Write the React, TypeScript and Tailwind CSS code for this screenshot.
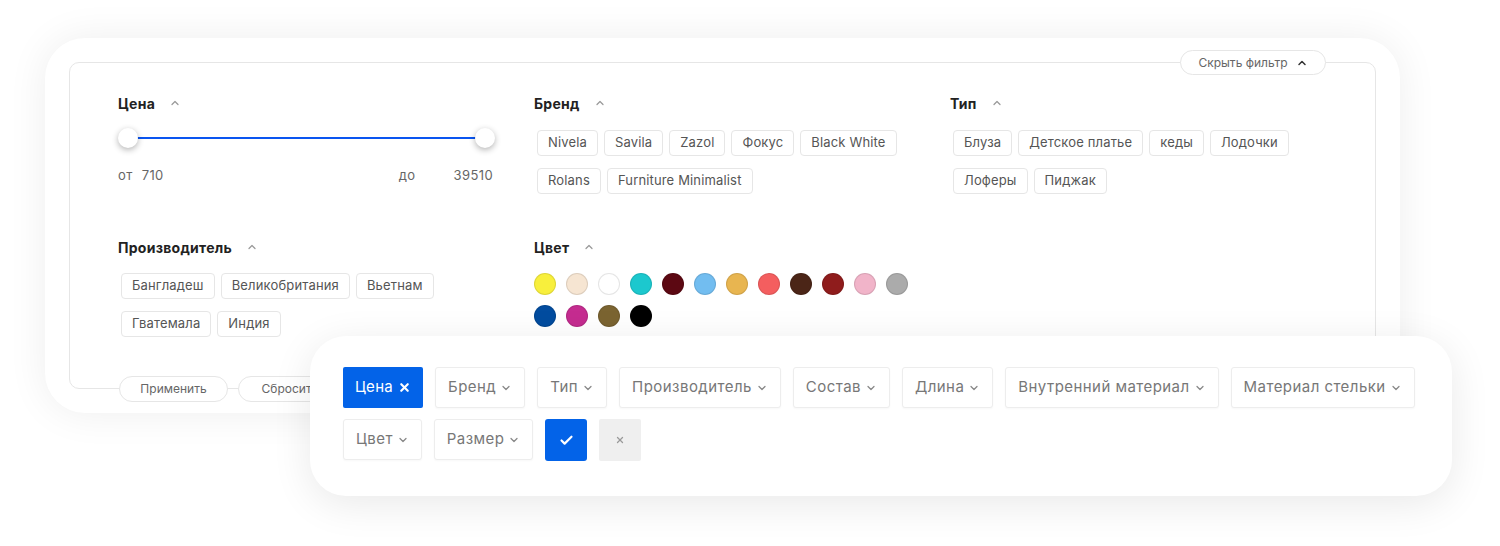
import { Check, ChevronDown, ChevronUp, X } from "lucide-react";

const brands = [
  ["Nivela", "Savila", "Zazol", "Фокус", "Black White"],
  ["Rolans", "Furniture Minimalist"],
];
const types = [
  ["Блуза", "Детское платье", "кеды", "Лодочки"],
  ["Лоферы", "Пиджак"],
];
const makers = [
  ["Бангладеш", "Великобритания", "Вьетнам"],
  ["Гватемала", "Индия"],
];
const colors = [
  "#f8ef3c",
  "#f6e5d2",
  "#ffffff",
  "#1cc8ce",
  "#5c0812",
  "#72bdf0",
  "#e8b550",
  "#f45e5f",
  "#4b2517",
  "#8f1c1c",
  "#f1b4c9",
  "#ababab",
  "#024c9f",
  "#c52c90",
  "#7b6431",
  "#000000",
];
const filters = [
  "Бренд",
  "Тип",
  "Производитель",
  "Состав",
  "Длина",
  "Внутренний материал",
  "Материал стельки",
];

function Heading({ title }: { title: string }) {
  return (
    <div className="flex h-5 items-center gap-[14px]">
      <span className="text-[14px] font-bold tracking-[0.02em] text-[#222]">{title}</span>
      <ChevronUp className="h-3 w-3 text-[#9a9a9a]" strokeWidth={2.5} />
    </div>
  );
}

function Tags({ rows }: { rows: string[][] }) {
  return (
    <div className="ml-[3px] flex flex-col gap-[12px]">
      {rows.map((row, i) => (
        <div key={i} className="flex gap-[6px]">
          {row.map((t) => (
            <span
              key={t}
              className="flex h-[26px] items-center rounded-[4px] border border-[#e6e6e6] bg-white px-[10px] text-[13px] tracking-[0.012em] text-[#555]"
            >
              {t}
            </span>
          ))}
        </div>
      ))}
    </div>
  );
}

function PriceSlider() {
  return (
    <div className="mt-[15px] w-[377px]">
      <div className="relative flex h-5 items-center px-[10px]">
        <div className="h-[2px] w-full bg-[#0a55f0]" />
        <span className="absolute left-0 top-0 h-5 w-5 rounded-full bg-white shadow-[0_2px_6px_rgba(0,0,0,0.3)]" />
        <span className="absolute right-0 top-0 h-5 w-5 rounded-full bg-white shadow-[0_2px_6px_rgba(0,0,0,0.3)]" />
      </div>
      <div className="mt-[18px] flex items-center justify-between text-[13px] tracking-[0.03em] text-[#666]">
        <div className="flex gap-[9px]">
          <span>от</span>
          <span>710</span>
        </div>
        <div className="mr-[2px] flex gap-[38px]">
          <span>до</span>
          <span>39510</span>
        </div>
      </div>
    </div>
  );
}

function FilterButton({ label }: { label: string }) {
  return (
    <div className="flex h-[41px] items-center gap-[4px] rounded-[3px] border border-[#ededed] bg-white px-[12px] text-[15px] tracking-[0.03em] text-[#777] shadow-[0_1px_2px_rgba(0,0,0,0.03)]">
      <span>{label}</span>
      <ChevronDown className="h-3 w-3 text-[#888]" strokeWidth={2.5} />
    </div>
  );
}

export default function App() {
  return (
    <div
      className="relative h-[546px] w-[1500px] overflow-hidden bg-white pl-[45px] pt-[38px]"
      style={{ fontFamily: "Inter, 'Noto Sans', sans-serif" }}
    >
      <div className="h-[375px] w-[1355px] rounded-[40px] bg-white p-[24px] shadow-[0_0_40px_rgba(0,0,0,0.07)]">
        <div className="relative h-[327px] rounded-[10px] border border-[#e6e6e6] pl-[48px] pt-[30px]">
          <div className="grid grid-cols-[416px_416px_416px] gap-y-[43px]">
            <div className="flex flex-col">
              <Heading title="Цена" />
              <PriceSlider />
            </div>
            <div className="flex flex-col gap-[17px]">
              <Heading title="Бренд" />
              <Tags rows={brands} />
            </div>
            <div className="flex flex-col gap-[17px]">
              <Heading title="Тип" />
              <Tags rows={types} />
            </div>
            <div className="flex flex-col gap-[16px]">
              <Heading title="Производитель" />
              <Tags rows={makers} />
            </div>
            <div className="flex flex-col gap-[16px]">
              <Heading title="Цвет" />
              <div className="flex w-[390px] flex-wrap gap-x-[10px] gap-y-[10px]">
                {colors.map((c, i) => (
                  <span
                    key={i}
                    className="h-[22px] w-[22px] rounded-full border border-black/10"
                    style={{ backgroundColor: c }}
                  />
                ))}
              </div>
            </div>
          </div>

          <div className="absolute -top-[13px] right-[49px] flex h-[25px] w-[146px] items-center justify-center gap-[8px] rounded-full border border-[#e6e6e6] bg-white text-[12px] text-[#666]">
            <span>Скрыть фильтр</span>
            <ChevronUp className="h-3 w-3 text-[#333]" strokeWidth={3} />
          </div>

          <div className="absolute -bottom-[14px] left-[49px] flex items-center gap-[10px]">
            <span className="flex h-[26px] w-[109px] items-center justify-center rounded-full border border-[#e6e6e6] bg-white text-[12px] text-[#666]">
              Применить
            </span>
            <span className="flex h-[26px] w-[104px] items-center justify-center rounded-full border border-[#e6e6e6] bg-white text-[12px] text-[#666]">
              Сбросить
            </span>
          </div>
        </div>
      </div>

      <div className="absolute left-[310px] top-[336px] h-[160px] w-[1142px] rounded-[36px] bg-white pl-[33px] pr-[16px] pt-[31px] shadow-[0_8px_40px_rgba(0,0,0,0.09)]">
        <div className="flex flex-wrap gap-x-[12px] gap-y-[11px]">
          <div className="flex h-[41px] items-center gap-[5px] rounded-[2px] bg-[#0363e8] px-[12px] text-[15px] tracking-[0.02em] text-white">
            <span>Цена</span>
            <X className="h-[13px] w-[13px]" strokeWidth={4} />
          </div>
          {filters.map((f) => (
            <FilterButton key={f} label={f} />
          ))}
          <FilterButton label="Цвет" />
          <FilterButton label="Размер" />
          <div className="flex h-[42px] w-[42px] items-center justify-center rounded-[3px] bg-[#0363e8]">
            <Check className="h-[15px] w-[15px] text-white" strokeWidth={3.5} />
          </div>
          <div className="flex h-[42px] w-[42px] items-center justify-center rounded-[2px] bg-[#efefef]">
            <X className="h-[10px] w-[10px] text-[#9a9a9a]" strokeWidth={3} />
          </div>
        </div>
      </div>
    </div>
  );
}
